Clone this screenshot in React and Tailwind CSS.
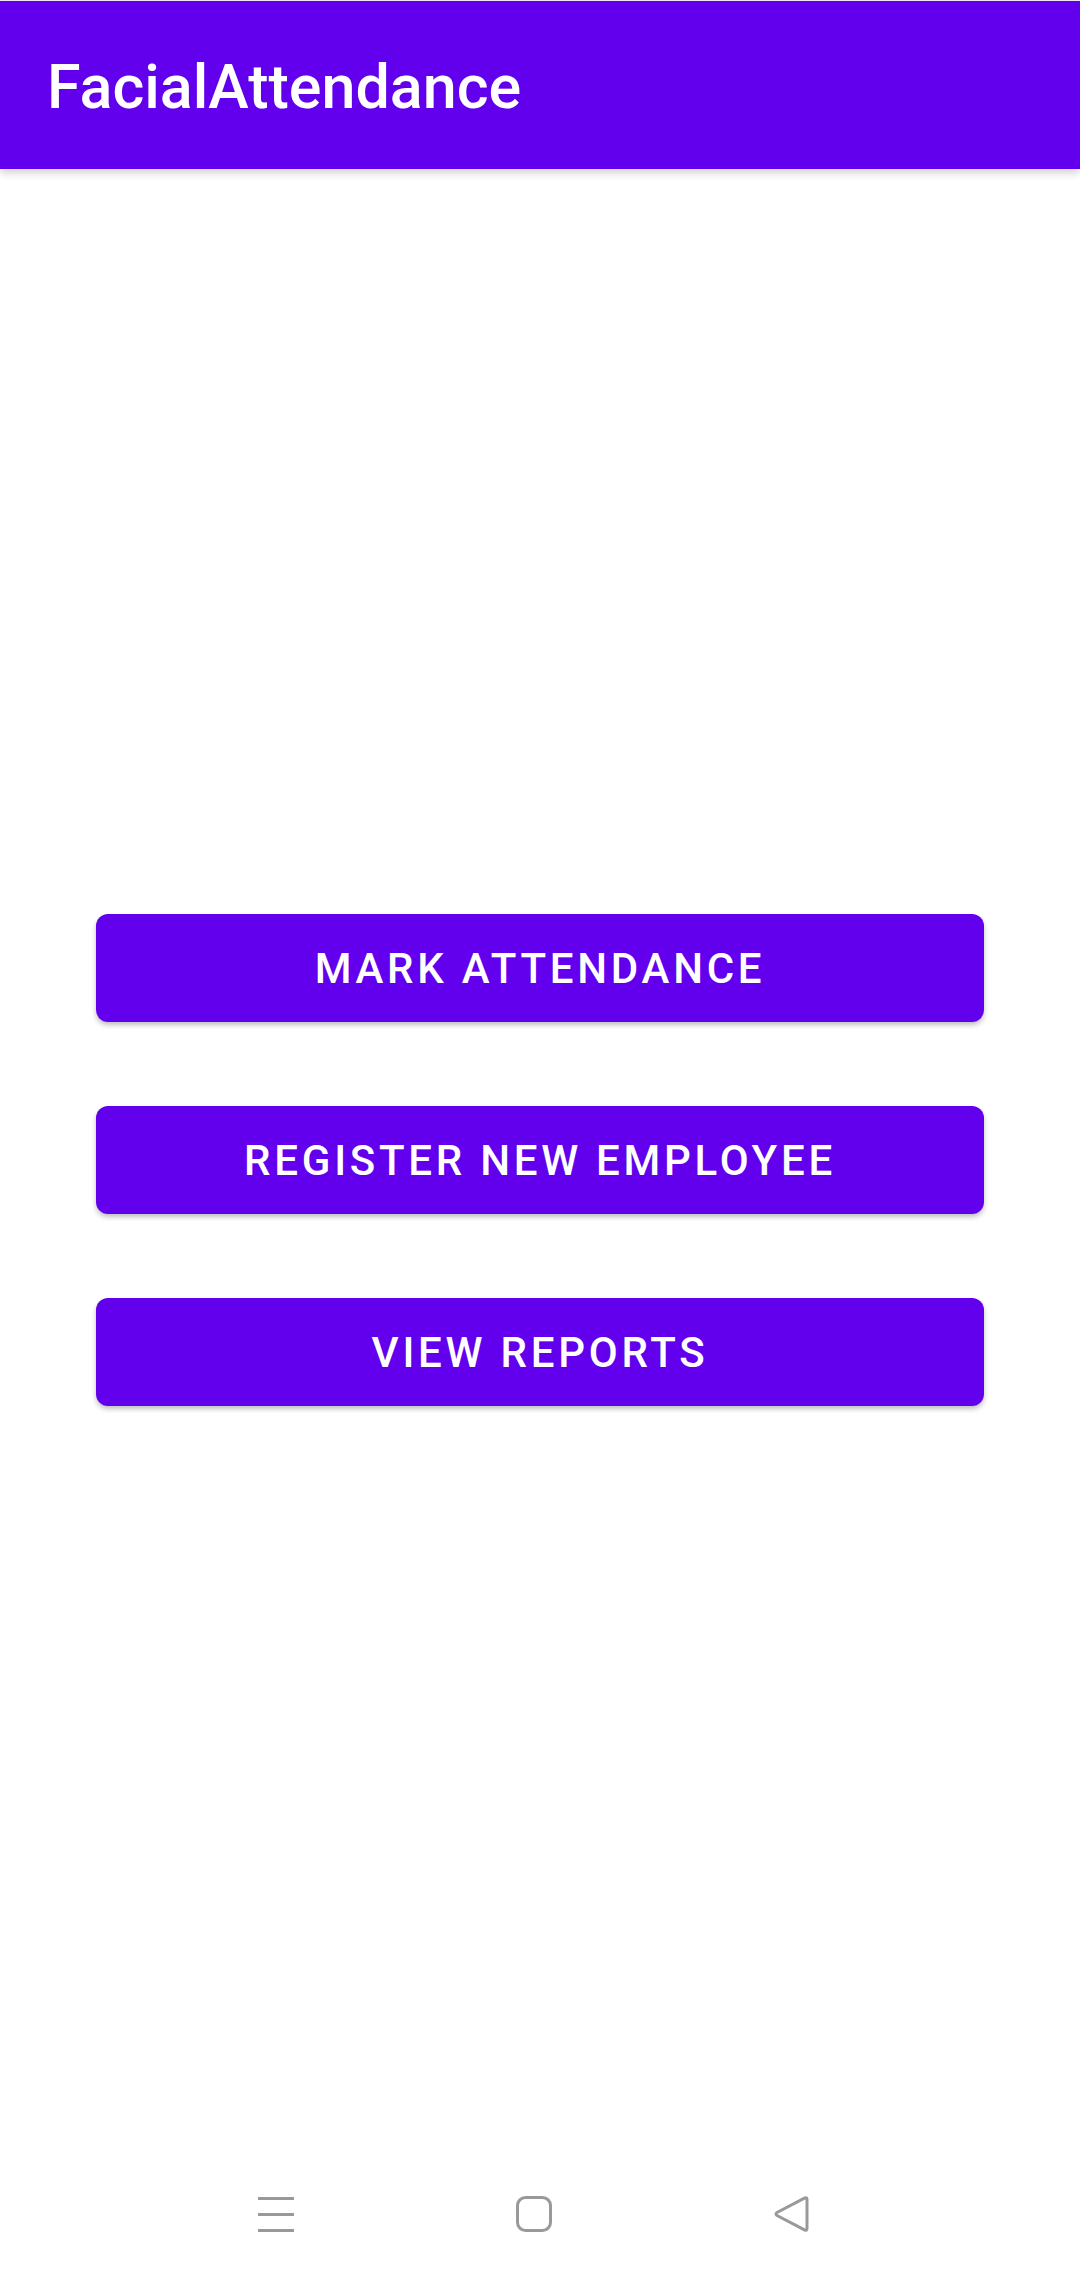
const buttons = ["MARK ATTENDANCE", "REGISTER NEW EMPLOYEE", "VIEW REPORTS"]

const NavBar = () => (
    <div className="h-[134px] flex items-center pl-[258px] gap-[222px]">
        <svg width="36" height="36" viewBox="0 0 36 36">
            <rect x="0" y="1" width="36" height="3" fill="#999" />
            <rect x="0" y="17" width="36" height="3" fill="#999" />
            <rect x="0" y="33" width="36" height="3" fill="#999" />
        </svg>
        <svg width="36" height="36" viewBox="0 0 36 36">
            <rect x="1.5" y="1.5" width="33" height="33" rx="8" fill="none" stroke="#999" strokeWidth="3" />
        </svg>
        <svg width="36" height="36" viewBox="0 0 36 36">
            <path d="M33 3.5 L33 32.5 Q33 35 30.5 33.8 L3 19.5 Q1 18 3 16.5 L30.5 2.2 Q33 1 33 3.5 Z"
                fill="none" stroke="#999" strokeWidth="3" strokeLinejoin="round" />
        </svg>
    </div>
)

const App = () => {
    return (
        <div className="w-[1080px] h-[2281px] bg-white flex flex-col font-['Roboto',sans-serif]">
            {/* toolbar */}
            <div className="h-[169px] border-t border-[#ece6f7] bg-[#6200ee] shadow-[0_4px_8px_rgba(0,0,0,0.18)] flex items-center pl-[47px] relative z-10">
                <h1 className="text-white text-[61px] font-medium leading-none mt-[4px]">FacialAttendance</h1>
            </div>

            <div className="flex-1 flex flex-col items-center pt-[745px] gap-[84px]">
                {buttons.map((label) => (
                    <button key={label}
                        className="w-[888px] h-[108px] rounded-[12px] bg-[#6200ee] text-white text-[42px] font-medium tracking-[3.75px]
                        shadow-[0_3px_5px_rgba(0,0,0,0.25)] flex items-center justify-center">
                        {label}
                    </button>
                ))}
            </div>

            <NavBar />
        </div>
    )
}

export default App
